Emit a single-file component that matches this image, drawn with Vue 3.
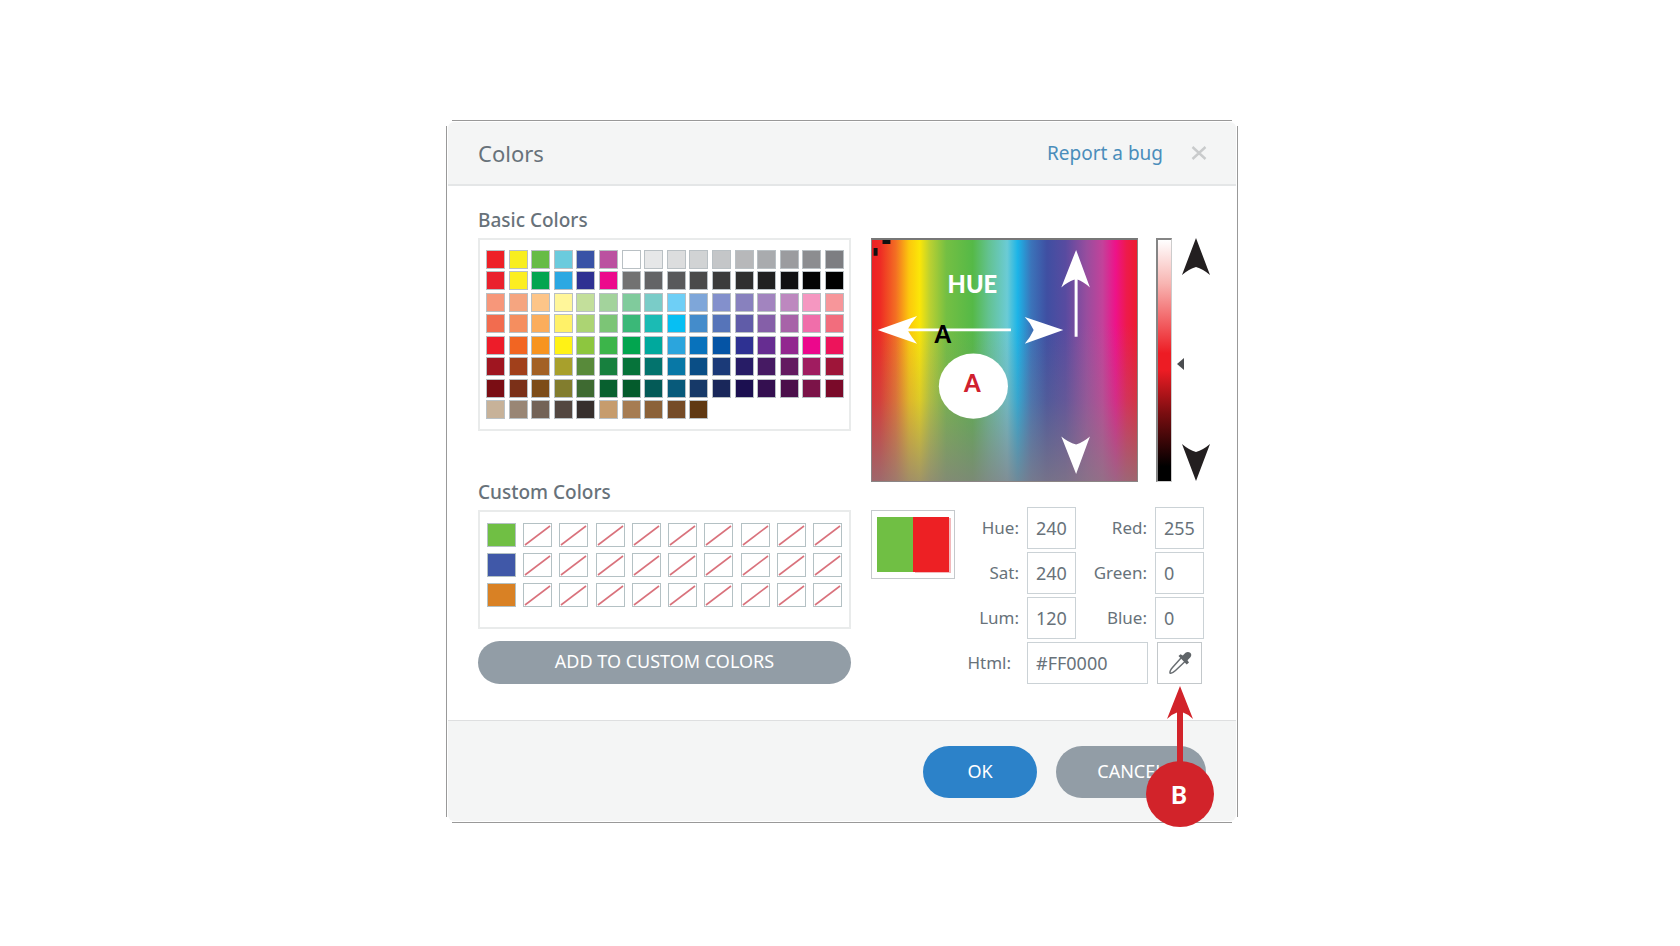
<script setup>
import { ref } from 'vue'

const basicRows = [
  ['#ee2027', '#f8ee1f', '#66bc46', '#6acbdd', '#3853a6', '#bb51a0', '#ffffff', '#e6e7e8', '#dcddde', '#d1d3d4', '#c4c6c8', '#b7b8ba', '#a9abae', '#9b9c9f', '#8c8d90', '#7d7e82'],
  ['#ea212d', '#fcee21', '#04a550', '#2ba8e2', '#2e3192', '#ec0a8c', '#727272', '#636466', '#58595b', '#4a4a4a', '#3b3b3b', '#2f2f2f', '#212121', '#101113', '#040404', '#000000'],
  ['#f7977a', '#f5a580', '#fdc588', '#fff69a', '#c3df9b', '#a3d39c', '#80cb9c', '#7accc8', '#6ecff6', '#7ea6d9', '#8390cc', '#8881be', '#a284bf', '#bd88bf', '#f597c1', '#f7969a'],
  ['#f26c4f', '#f58e5f', '#fbad5c', '#fff168', '#acd473', '#7cc576', '#3bb878', '#1bbbb4', '#06bff3', '#448ccb', '#5674b9', '#605ca8', '#855fa8', '#a763a8', '#f06eaa', '#f26d7d'],
  ['#ed1c29', '#f26522', '#f7941f', '#fff215', '#8dc63f', '#3cb54a', '#02a54f', '#00a99d', '#2ba5dd', '#0872bc', '#0554a5', '#2e3192', '#662d91', '#92278f', '#ec078c', '#ed145b'],
  ['#9f1520', '#a1401b', '#a36125', '#a8a02c', '#588a3a', '#17803e', '#06733a', '#03736d', '#0878a6', '#0a4e86', '#1b3a78', '#271c66', '#461a63', '#631a60', '#a01c60', '#9e1539'],
  ['#7a0d14', '#7b3018', '#7d4c18', '#827d2e', '#3e6a31', '#08602f', '#045b2c', '#045a57', '#085a7a', '#163968', '#19275a', '#1b0f50', '#340f50', '#4b0f4b', '#7b1348', '#7a0a29'],
  ['#c7b299', '#998675', '#736357', '#534741', '#362f2d', '#c69c6d', '#a67c52', '#8b6239', '#754c28', '#603913'],
]
const basicColors = basicRows.flat()

const customColors = Array.from({ length: 30 }, (_, i) => ({ 0: '#70bf44', 10: '#4058a8', 20: '#d98124' })[i] ?? null)

const hue = ref('240')
const sat = ref('240')
const lum = ref('120')
const red = ref('255')
const green = ref('0')
const blue = ref('0')
const html = ref('#FF0000')
</script>

<template>
  <main class="page">
    <section class="dialog" role="dialog" aria-labelledby="dialog-title">
      <header class="header">
        <h1 id="dialog-title">Colors</h1>
        <a class="report" href="#">Report a bug</a>
        <button class="close" type="button" aria-label="Close">
          <svg viewBox="0 0 16 16" width="16" height="16"><path d="M1.500 2L14.500 14M14.500 2L1.500 14" stroke="#c9cbcc" stroke-width="2.4" /></svg>
        </button>
      </header>

      <div class="body">
        <div class="palettes">
          <h2>Basic Colors</h2>
          <div class="panel basic">
            <button
              v-for="(color, i) in basicColors"
              :key="i"
              class="swatch"
              type="button"
              :aria-label="color"
              :style="{ backgroundColor: color }"
            ></button>
          </div>

          <h2 class="custom-title">Custom Colors</h2>
          <div class="panel custom">
            <button
              v-for="(color, i) in customColors"
              :key="i"
              class="slot"
              type="button"
              :aria-label="color || 'Empty slot'"
              :style="color ? { backgroundColor: color } : null"
            >
              <svg v-if="!color" viewBox="0 0 28 22" preserveAspectRatio="none"><path d="M1 21L27 2" stroke="#d9727c" stroke-width="1.6" /></svg>
            </button>
          </div>
          <button class="add" type="button">ADD TO CUSTOM COLORS</button>
        </div>

        <div class="mixer">
          <div class="pickers">
            <div class="spectrum">
              <svg class="overlay" viewBox="0 0 267 244" aria-hidden="true">
                <path d="M10 0h8v4h-8zM1 8h4v8h-4z" fill="#111" />
                <g fill="#fff">
                  <path d="M5 91L45 77Q39 84 36 89.500H140V92.500H36Q39 98 45 105Z" />
                  <path d="M193 91L154 105Q160 98 163 91Q160 84 154 78Z" />
                  <path d="M206 10L220 48Q213 42 207.500 40V98H204.500V40Q198 42 191 48Z" />
                  <path d="M206 237L191 199Q198 205 206 207Q213 205 220 199Z" />
                  <ellipse cx="102" cy="148" rx="35" ry="33" />
                </g>
                <text x="101" y="54" fill="#fff">HUE</text>
                <text x="71" y="104" fill="#000">A</text>
                <text x="101" y="154" fill="#d0202e">A</text>
              </svg>
            </div>
            <input class="lum-slider" type="range" min="0" max="240" v-model="lum" aria-label="Luminance" />
            <svg class="marker" viewBox="0 0 7 12" width="7" height="12" aria-hidden="true"><path d="M0 6L7 0V12Z" fill="#4b4d50" /></svg>
            <svg class="range" viewBox="0 0 28 244" aria-hidden="true">
              <path d="M14 0L28 37Q21 31 14 29Q7 31 0 37Z" fill="#231f20" />
              <path d="M14 243L0 206Q7 212 14 214Q21 212 28 206Z" fill="#231f20" />
            </svg>
          </div>

          <div class="fields">
            <div class="preview" role="img" aria-label="Current and new color"><span class="before"></span><span class="after"></span></div>
            <label for="hue">Hue:</label><input id="hue" v-model="hue" type="text" />
            <label for="red">Red:</label><input id="red" v-model="red" type="text" />
            <label for="sat">Sat:</label><input id="sat" v-model="sat" type="text" />
            <label for="green">Green:</label><input id="green" v-model="green" type="text" />
            <label for="lum">Lum:</label><input id="lum" v-model="lum" type="text" />
            <label for="blue">Blue:</label><input id="blue" v-model="blue" type="text" />
            <label class="html-label" for="html">Html:</label><input id="html" v-model="html" class="html-input" type="text" />
            <button class="dropper" type="button" aria-label="Pick a color from the screen">
              <svg viewBox="0 0 24 24" width="24" height="24">
                <path d="M13 7L4.500 16.500Q1.500 20 2 22Q4 22.800 7.500 19.500L17 10.500" fill="none" stroke="#6a6f73" stroke-width="1.500" />
                <path d="M10.500 5L12.500 3.200L14.800 4.500L17.500 1.800Q20 .300 22.500 2Q24.200 4 22.200 6.500L19.500 9.200L21 11.500L18.700 13.500Z" fill="#5f6468" />
              </svg>
            </button>
          </div>
        </div>
      </div>

      <footer class="footer">
        <button class="ok" type="button">OK</button>
        <button class="cancel" type="button">CANCEL</button>
      </footer>

      <svg class="callout" viewBox="0 0 68 141" width="68" height="141" aria-hidden="true">
        <path d="M34 0L47 33Q42 28 37 26.500V80H31V26.500Q26 28 21 33Z" fill="#d2232a" />
        <ellipse cx="34" cy="108" rx="34" ry="33" fill="#d2232a" />
        <text x="33" y="118" fill="#fff">B</text>
      </svg>
    </section>
  </main>
</template>

<style>
body {
  background: #fff;
}
</style>

<style scoped>
.page,
.page * {
  box-sizing: border-box;
}
.page {
  min-height: 100vh;
  display: flex;
  align-items: center;
  justify-content: center;
  padding: 0 0 4px 4px;
  color: #68727a;
  font-family: "Noto Sans", "Open Sans", sans-serif;
}
button,
input {
  margin: 0;
  padding: 0;
  border: 0;
  font: inherit;
  color: inherit;
}
.dialog {
  position: relative;
  width: 100%;
  max-width: 792px;
  padding: 2px;
  --edge: linear-gradient(#999, #999);
  background:
    var(--edge) center top / calc(100% - 12px) 1px no-repeat,
    var(--edge) center bottom / calc(100% - 12px) 1px no-repeat,
    var(--edge) left center / 1px calc(100% - 12px) no-repeat,
    var(--edge) right center / 1px calc(100% - 12px) no-repeat;
}
.header {
  display: flex;
  align-items: center;
  height: 64px;
  padding: 0 29px 0 30px;
  background: #f4f5f5;
  border-bottom: 2px solid #e4e6e7;
  border-radius: 6px 6px 0 0;
}
h1 {
  flex: 1;
  margin: 0;
  font-size: 22px;
  line-height: 30px;
  font-weight: 400;
}
.report {
  margin-right: 28px;
  color: #4a8dbb;
  font-size: 19px;
  line-height: 26px;
  text-decoration: none;
}
.close {
  display: flex;
  background: none;
}
.body {
  display: grid;
  grid-template-columns: 373fr 339fr;
  gap: 20px;
  padding: 22px 26px 36px 30px;
}
.palettes {
  display: flex;
  flex-direction: column;
}
h2 {
  margin: 0 0 6px;
  font-size: 19px;
  line-height: 24px;
  font-weight: 500;
}
.custom-title {
  margin-top: 49px;
}
.panel {
  display: grid;
  justify-content: space-between;
  border: 2px solid #e9ebeb;
}
.basic {
  grid-template-columns: repeat(16, 19px);
  align-content: space-between;
  height: 193px;
  padding: 10px 5px 9px 6px;
}
.swatch {
  height: 19px;
  border: 1px solid #b9c0c4;
}
.custom {
  grid-template-columns: repeat(10, 29px);
  row-gap: 6px;
  padding: 11px 7px 20px;
}
.slot {
  height: 24px;
  border: 1px solid #b4c1c4;
  background: #fff;
}
.slot svg {
  display: block;
  width: 100%;
  height: 100%;
}
.add,
.ok,
.cancel {
  padding-bottom: 2px;
  color: #fff;
  font-size: 18px;
  line-height: 24px;
  background: #929da6;
  border-radius: 26px;
}
.add {
  height: 43px;
  margin-top: 12px;
}
.mixer {
  padding-top: 30px;
}
.pickers {
  display: flex;
}
.spectrum {
  flex: 1;
  height: 244px;
  border: 1px solid #8b8585;
  border-top: 2px solid #777;
  background:
    linear-gradient(to bottom, rgba(134, 124, 130, 0) 35%, rgba(134, 124, 130, 0.25) 66%, rgba(134, 124, 130, 0.76) 100%),
    linear-gradient(to right, #ec2024 0%, #ee2a24 3%, #f36f23 9%, #fcc80d 14%, #fbe608 18%, #b9d032 22%, #74bf43 28%, #55b947 38%, #63c291 44%, #6bcbd5 51%, #1cb4e8 55%, #3b74ba 60%, #3f4fa2 66%, #584ba0 73%, #984d9e 81%, #c3429a 87%, #ee1289 92%, #ed1a4c 96%, #ed1c2e 100%);
}
.overlay {
  display: block;
  width: 100%;
  height: 100%;
}
.overlay text,
.callout text {
  font: 900 24px Lato, "Noto Sans", sans-serif;
  text-anchor: middle;
}
.lum-slider {
  appearance: none;
  writing-mode: vertical-lr;
  direction: rtl;
  width: 16px;
  height: 244px;
  margin: 0 5px 0 18px;
  border: 2px solid #858585;
  border-right: 1px solid #ccc;
  border-bottom: 1px solid #ccc;
  background: linear-gradient(#fff, #f8b5b2 18%, #ed1c24 47%, #ed1c24 54%, #7a0d10 72%, #000 94%);
}
.lum-slider::-webkit-slider-thumb {
  appearance: none;
  width: 14px;
  height: 4px;
  background: transparent;
}
.marker {
  align-self: center;
  margin-top: 8px;
}
.range {
  width: 28px;
  height: 244px;
  margin-left: -2px;
}
.fields {
  display: grid;
  grid-template-columns: 84px 1fr 49px 79px 49px;
  grid-auto-rows: 42px;
  row-gap: 3px;
  align-items: stretch;
  margin-top: 25px;
  padding-right: 6px;
  font-size: 17px;
}
.preview {
  grid-row: 1 / span 4;
  display: flex;
  height: 69px;
  margin-top: 3px;
  padding: 5px;
  border: 1px solid #c5c9cc;
}
.preview span {
  flex: 1;
  margin: 1px 0;
}
.before {
  background: #70bf44;
}
.after {
  background: #ed2024;
  box-shadow: 2px 1px 0 #f3b8bb;
}
label {
  align-self: center;
  padding-right: 8px;
  text-align: right;
  line-height: 24px;
}
.fields input {
  width: 100%;
  min-width: 0;
  padding-left: 8px;
  border: 1px solid #cbd2d6;
  background: #fff;
  font-size: 18px;
}
.fields .html-label {
  padding-right: 16px;
}
.html-input {
  grid-column: span 2;
}
.fields .html-input {
  width: calc(100% - 7px);
}
.dropper {
  display: flex;
  align-items: center;
  justify-content: center;
  margin: 0 2px;
  border: 1px solid #c3c8cb;
  background: #fff;
}
.footer {
  display: flex;
  justify-content: flex-end;
  gap: 19px;
  padding: 25px 30px 23px;
  background: #f4f5f5;
  border-top: 1px solid #dedfe0;
  border-radius: 0 0 6px 6px;
}
.ok,
.cancel {
  height: 52px;
}
.ok {
  width: 114px;
  background: #2c82c9;
}
.cancel {
  width: 150px;
}
.callout {
  position: absolute;
  right: 24px;
  bottom: -4px;
}
</style>
